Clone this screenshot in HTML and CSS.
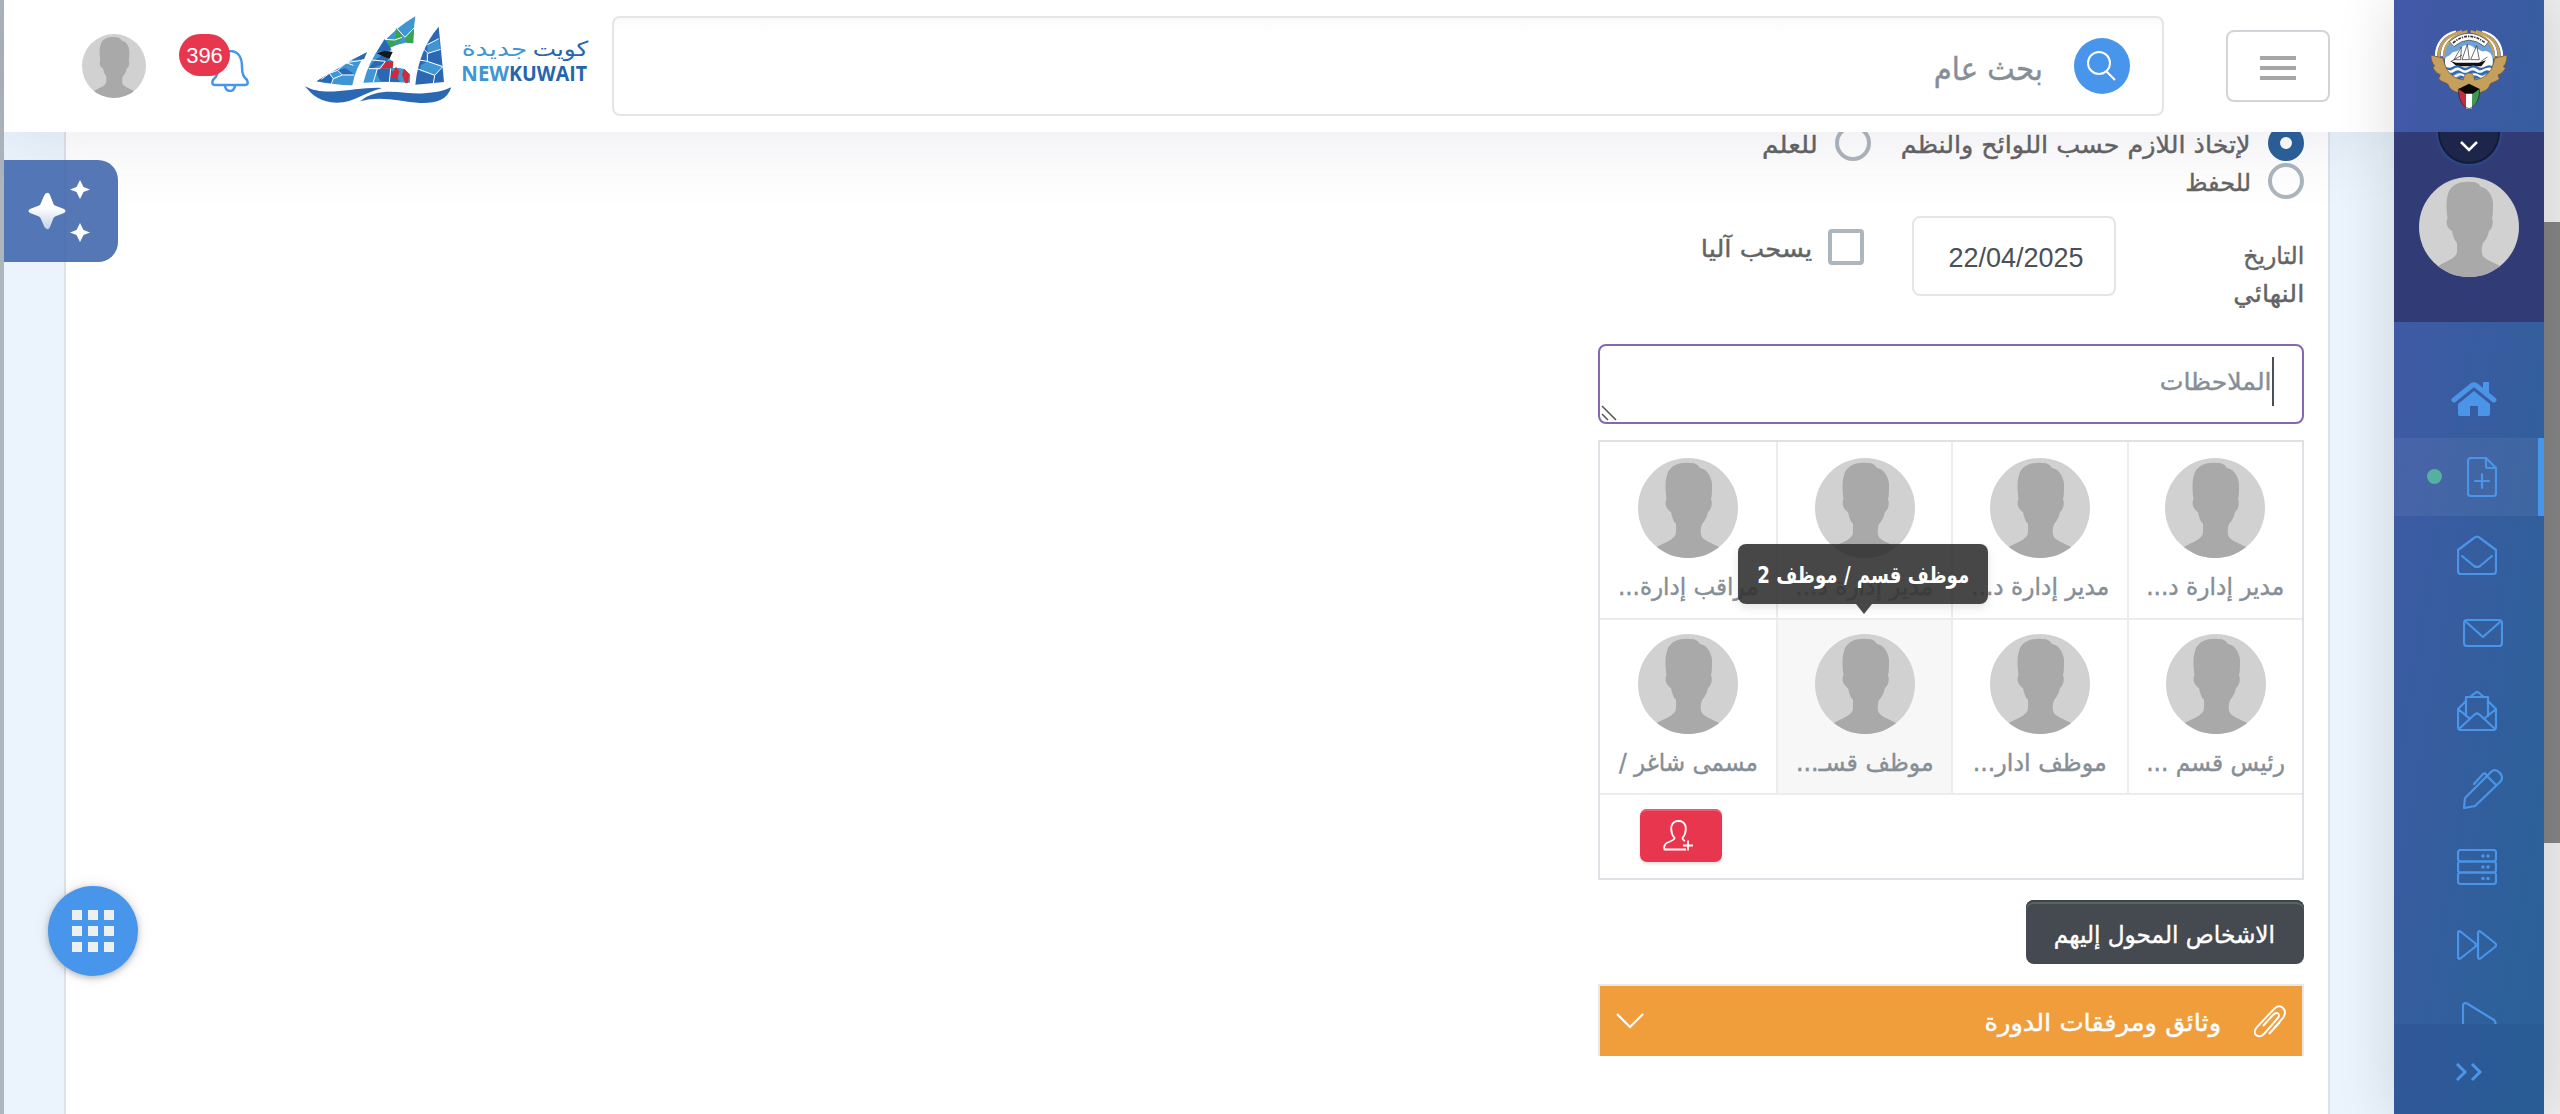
FILE: index.html
```html
<!DOCTYPE html>
<html lang="ar" dir="rtl">
<head>
<meta charset="utf-8">
<title>كويت جديدة</title>
<link rel="stylesheet" href="styles.css">
</head>
<body>
<svg class="defs" width="0" height="0">
  <defs>
    <clipPath id="round"><circle cx="50" cy="50" r="50"/></clipPath>
    <symbol id="avatar" viewBox="0 0 100 100">
      <g clip-path="url(#round)">
        <rect width="100" height="100" fill="#d1d1d1"/>
        <path fill="#a9a9a9" d="M16 91C26 84 38 82 38 74V66C35 63 34 59 33 54C29 52 26 46 28.500 41C27 30 27 22 30 14C34 7 42 4 52 5C58 5 60 7 62 10C69 11 73 18 74 26C74 33 74 38 73 41C75 46 73 52 70 54C69 59 67 63 64 66C62 73 62 78 66 81C71 85 79 87 84 91V100H16z"/>
      </g>
    </symbol>
  </defs>
</svg>
<div class="app">
  <div class="scroll"><div class="thumb"></div></div>
  <aside class="side">
    <div class="brand">
      <svg width="78" height="80" viewBox="0 0 234 240">
        <g fill="none" stroke="#fff" stroke-width="7"><path d="M18 82C18 45 40 15 78 8"/><path d="M35 82C36 52 52 26 86 14"/><path d="M216 82C216 45 194 15 156 8"/><path d="M199 82C198 52 182 26 148 14"/></g>
        <g fill="none" stroke="#c4a05c" stroke-width="8"><path d="M26 86C26 48 44 20 96 7"/><path d="M43 88C40 50 64 20 112 7"/><path d="M208 86C208 48 190 20 138 7"/><path d="M191 88C194 50 170 20 122 7"/></g>
        <circle cx="117" cy="86" r="73" fill="#6fa3d6"/>
        <path fill="#fff" d="M45 100C43 78 58 84 62 76C70 64 84 72 90 58C104 44 124 44 136 60C146 56 152 72 164 66C182 66 190 82 188 104L186 124H47z"/>
        <g stroke="#222" stroke-width="2" fill="#fff"><path d="M72 92L94 54L92 92zM96 92L112 46L118 92zM122 92L140 50L148 92z"/><path d="M62 98L96 78M152 98L172 84" fill="none"/></g>
        <path fill="#111" d="M62 96L78 101H146L168 94L154 112H80z"/>
        <g fill="none" stroke="#3767ae" stroke-width="7"><path d="M46 116q12 8 24 0t24 0t24 0t24 0t24 0t22 0"/><path d="M52 132q11 8 22 0t22 0t22 0t22 0t22 0t18 0"/><path d="M64 148q11 8 22 0t22 0t22 0t22 0t18 0"/></g>
        <g fill="none" stroke="#fff" stroke-width="6"><path d="M50 124q11 8 22 0t22 0t22 0t22 0t22 0t22 0"/><path d="M58 140q11 8 22 0t22 0t22 0t22 0t22 0"/></g>
        <path fill="#fff" stroke="#333" stroke-width="2" d="M58 38Q116-12 176 38L164 53Q116 14 72 53z"/>
        <path fill="none" stroke="#333" stroke-width="5" stroke-dasharray="9 3 4 3" d="M69 42Q116 2 166 42"/>
        <path fill="#c4a05c" stroke="#6f5524" stroke-width="2" d="M3 78L40 88C46 128 68 148 100 153C102 140 107 132 117 132C127 132 132 140 134 153C166 148 188 128 194 88L231 78C230 98 226 108 220 112L226 118C218 132 210 136 204 137L208 150C196 160 184 160 180 166C176 182 164 186 152 190H82C70 186 60 182 54 166C46 160 34 158 26 150L31 137C22 134 14 126 9 116L14 110C6 102 3 92 3 78z"/>
        <path fill="#fff" d="M104 180h24l-2 58q-9 4-18 0z"/>
        <path fill="#c62b3a" d="M86 178L108 188V236C94 228 86 214 86 178z"/>
        <path fill="#3e9a4e" d="M148 178L127 188V236C140 228 148 214 148 178z"/>
        <path fill="#080808" d="M117 164L149 180L128 194H107L85 180z"/>
        <path fill="none" stroke="#222" stroke-width="2" d="M85 180C86 216 98 232 117 239C136 232 148 216 149 180"/>
      </svg>
    </div>
    <div class="profile">
      <div class="notch"><svg width="20" height="12" viewBox="0 0 20 12"><path d="M2 2L10 10L18 2" fill="none" stroke="#fff" stroke-width="2.500"/></svg></div>
      <svg width="100" height="100"><use href="#avatar"/></svg>
    </div>
    <nav class="menu">
      <div class="item home"><svg width="46" height="36" viewBox="0 0 46 36"><path fill="#4a95e8" d="M23 10L39 23V33q0 2-2 2H27V25H19V35H9q-2 0-2-2V23z"/><path d="M3 19L21 4.500Q23 3 25 4.500L43 19" fill="none" stroke="#4a95e8" stroke-width="5" stroke-linecap="round"/><path fill="#4a95e8" d="M32 1h6v16l-6-5z"/></svg></div>
      <div class="item active"><svg width="30" height="40" viewBox="0 0 30 40"><path d="M1 4Q1 1 4 1H19L29 11V36Q29 39 26 39H4Q1 39 1 36zM19 1V9Q19 11 21 11H29M15 17V31M8 24H22"/></svg><i class="dot"></i></div>
      <div class="item"><svg width="40" height="40" viewBox="0 0 40 40"><path d="M1 15L17 3Q20 0 23 3L39 15V36Q39 39 36 39H4Q1 39 1 36zM5 21L17 31Q20 33 23 31L35 21"/></svg></div>
      <div class="item shift"><svg width="40" height="28" viewBox="0 0 40 28"><rect x="1" y="1" width="38" height="26" rx="3"/><path d="M2 2L20 18L38 2"/></svg></div>
      <div class="item"><svg width="40" height="40" viewBox="0 0 40 40"><path d="M9 10L1 18V36Q1 39 4 39H36Q39 39 39 36V18L31 10M9 25V6H31V25M13 6L18 2Q20 0 22 2L27 6M1 18L12 27M39 18L28 27M2 38L17 24Q20 21 23 24L38 38"/></svg></div>
      <div class="item shift"><svg width="40" height="40" viewBox="0 0 40 40"><path d="M1 39L2 29L28 3Q32-1 37 4Q41 9 37 13L12 37zM24 7L33 16M11 15L20 5Q22 3 24 7"/></svg></div>
      <div class="item"><svg width="40" height="36" viewBox="0 0 40 36"><rect x="1" y="1" width="38" height="11.500" rx="2.500"/><rect x="1" y="12.500" width="38" height="11" rx="2.500"/><rect x="1" y="23.500" width="38" height="11.500" rx="2.500"/><g class="solid"><circle cx="26" cy="7" r="1.800"/><circle cx="31" cy="7" r="1.800"/><circle cx="26" cy="18" r="1.800"/><circle cx="31" cy="18" r="1.800"/><circle cx="26" cy="29.500" r="1.800"/><circle cx="31" cy="29.500" r="1.800"/></g></svg></div>
      <div class="item"><svg width="40" height="30" viewBox="0 0 40 30"><path d="M1 3Q1 0 4 2L18 13Q20 15 18 17L4 28Q1 30 1 27zM21 3Q21 0 24 2L38 13Q40 15 38 17L24 28Q21 30 21 27z"/></svg></div>
      <div class="item"><svg width="35" height="42" viewBox="0 0 35 42"><path d="M1 4Q1 0 5 1.500L32 18Q35 21 32 24L5 40Q1 42 1 38z"/></svg></div>
    </nav>
    <div class="collapse"><svg width="28" height="20" viewBox="0 0 28 20"><path d="M2 2L10 10L2 18M17 2L25 10L17 18" fill="none" stroke="#4a95e8" stroke-width="3"/></svg></div>
  </aside>
  <div class="main">
    <header class="top">
      <button class="burger"><i></i><i></i><i></i></button>
      <div class="search">
        <span class="go"><svg width="32" height="32" viewBox="0 0 32 32"><g fill="none" stroke="#fff" stroke-width="2"><circle cx="13" cy="13" r="11"/><path d="M20 21L29 30"/></g></svg></span>
        <span class="hint t" style="--w:.91">بحث عام</span>
      </div>
      <svg class="logo" width="294" height="97" viewBox="30 30 882 291">
        <path fill="#3f96d2" d="M80 244Q168 190 231 157Q196 202 187 256Q130 255 80 244z"/>
        <path fill="#2a68b4" d="M168 188L231 157L222 178L187 180zM80 244L118 220L130 242L124 250zM143 211L165 204L192 222L157 225z"/>
        <path fill="#3f96d2" d="M220 248Q252 120 376 49Q370 92 368 132L347 126L330 160L300 150L304 180L330 204L360 208V248Q290 244 220 248z"/>
        <path fill="#2a68b4" d="M284 116L306 150L260 156L246 180zM236 208Q262 160 300 164L290 186L250 204zM262 206L302 206L330 246L272 244L262 226z"/>
        <path fill="#fff" d="M370 130L347 128L323 134L300 142L308 156L298 178L310 184L308 204L328 204L342 206L358 222L372 226z"/>
        <path fill="#39a352" d="M318 82L336 112L323 134L316 118zM372 86L370 130L347 128L345 112zM290 118L314 120L318 134L300 144z"/>
        <path fill="#171717" d="M260 160L284 152L308 156L298 176L282 170z"/>
        <path fill="#cd2b3c" d="M286 184L310 184L308 204L270 206zM318 200L328 214L322 238L300 230zM342 206L358 222L354 248L346 250L336 224z"/>
        <path fill="#2a68b4" d="M446 80Q455 170 462 246L376 254Q386 150 446 80z"/>
        <path fill="#3f96d2" d="M412 134L448 114L450 148L412 160zM392 196L412 184L458 196L434 226L390 214z"/>
        <path fill="none" stroke="#fff" stroke-width="3" d="M94 238L118 220L130 236L124 252M118 220L143 211L157 225H192M130 236L157 225M143 211L168 188L222 180M168 188L190 196M318 82L345 112L372 84M284 118L314 120L336 112M246 180L286 184L270 206H236M302 206L298 246M262 206L250 246M412 134L446 116M400 146L414 160L452 148M386 180L412 184L458 200L434 226L382 206M412 160L412 184M434 226L430 250"/>
        <path fill="#2a68b4" d="M45 259C100 290 175 266 245 264Q278 262 275 265C225 278 200 300 160 307C100 314 70 290 45 259z"/>
        <path fill="#2a68b4" d="M210 304C270 254 350 286 402 280Q450 278 484 262C470 302 440 310 390 309C330 304 270 286 210 304z"/>
        <text class="logo-ar" x="895" y="168" textLength="167" lengthAdjust="spacingAndGlyphs" fill="#2565ae">كويت</text>
        <text class="logo-ar" x="712" y="168" textLength="197" lengthAdjust="spacingAndGlyphs" fill="#3f96d2">جديدة</text>
        <text class="logo-en" x="514" y="242" textLength="143" lengthAdjust="spacingAndGlyphs" fill="#3f96d2">NEW</text>
        <text class="logo-en" x="657" y="242" textLength="234" lengthAdjust="spacingAndGlyphs" fill="#2565ae">KUWAIT</text>
      </svg>
      <div class="bell">
        <svg width="38" height="42" viewBox="0 0 38 42"><path d="M19 1C10 1 7 9 7 17C7 25 5 27 2 30Q0 35 4 35H34Q38 35 36 30C33 27 31 25 31 17C31 9 28 1 19 1zM14 36Q15 41 19 41Q23 41 24 36" fill="none" stroke="#4895ec" stroke-width="2.500"/></svg>
        <span class="count">396</span>
      </div>
      <svg class="me" width="64" height="64"><use href="#avatar"/></svg>
    </header>
    <div class="content">
      <section class="panel">
        <div class="form">
          <div class="opts">
            <label class="opt first"><i class="radio on"></i><span class="t" style="--w:1.058">لإتخاذ اللازم حسب اللوائح والنظم</span></label>
            <label class="opt"><i class="radio"></i><span class="t" style="--w:1.1">للعلم</span></label>
          </div>
          <div class="opts"><label class="opt"><i class="radio"></i><span class="t" style="--w:1">للحفظ</span></label></div>
          <div class="daterow">
            <div class="dlabel"><span class="t" style="--w:.98">التاريخ</span><span class="t" style="--w:1.07">النهائي</span></div>
            <div class="date">22/04/2025</div>
            <label class="opt auto"><i class="check"></i><span class="t" style="--w:1.08">يسحب آليا</span></label>
          </div>
          <div class="notes"><i class="caret"></i><span class="t" style="--w:1.05">الملاحظات</span>
            <svg class="grip" width="16" height="16" viewBox="0 0 16 16"><path d="M1 1L15 15M1 9L7 15" stroke="#555" stroke-width="1.500"/></svg>
          </div>
          <div class="people">
            <div class="cells">
              <div class="cell"><svg width="100" height="100"><use href="#avatar"/></svg><span class="t" style="--w:.97">مدير إدارة د...</span></div>
              <div class="cell"><svg width="100" height="100"><use href="#avatar"/></svg><span class="t" style="--w:.97">مدير إدارة د...</span></div>
              <div class="cell"><svg width="100" height="100"><use href="#avatar"/></svg><span class="t" style="--w:.97">مدير إدارة د...</span></div>
              <div class="cell"><svg width="100" height="100"><use href="#avatar"/></svg><span class="t" style="--w:.96">مراقب إدارة...</span></div>
              <div class="cell"><svg width="100" height="100"><use href="#avatar"/></svg><span class="t" style="--w:.97">رئيس قسم ...</span></div>
              <div class="cell"><svg width="100" height="100"><use href="#avatar"/></svg><span class="t" style="--w:.99">موظف ادار...</span></div>
              <div class="cell hover"><svg width="100" height="100"><use href="#avatar"/></svg><span class="t" style="--w:.985">موظف قسـ...</span>
                <div class="tip"><span class="t" style="--w:.79">موظف قسم / موظف 2</span></div>
              </div>
              <div class="cell"><svg width="100" height="100"><use href="#avatar"/></svg><span class="t" style="--w:.96">مسمى شاغر /</span></div>
            </div>
            <div class="actions"><button class="add"><svg width="31" height="31" viewBox="0 0 31 31"><path d="M23 29.500H1.500Q0 24 6 22C10 20 12 19 11.500 18C8 14 8 9 8.500 6Q10 1 15.500 1Q21 1 22.500 6C23 9 23 14 19.500 18C19.500 20 20 20 22 21M20 25.500H30M25 20.500V30.500" fill="none" stroke="#fff" stroke-width="1.800"/></svg></button></div>
          </div>
          <button class="dark"><span class="t" style="--w:.966">الاشخاص المحول إليهم</span></button>
          <div class="docs">
            <svg width="32" height="33" viewBox="0 0 32 33"><path d="M15 29L29 13Q33 7 29 3Q25-1 20 4L3 22Q-1 27 2 30Q6 33 10 29L24 13Q26 10 24 8.500Q22 7 19 10L9 21M15 29L26 17" fill="none" stroke="#fff" stroke-width="1.900"/></svg>
            <span class="t" style="--w:1.07">وثائق ومرفقات الدورة</span>
            <svg class="down" width="28" height="16" viewBox="0 0 28 16"><path d="M1 1L14 14L27 1" fill="none" stroke="#fff" stroke-width="2.200"/></svg>
          </div>
        </div>
      </section>
    </div>
  </div>
</div>
<div class="ai"><svg width="76" height="64" viewBox="0 0 76 64"><defs><linearGradient id="g" x1="0" y1="0" x2="0" y2="1"><stop offset=".4" stop-color="#fff"/><stop offset="1" stop-color="#c3d0e8"/></linearGradient></defs><path fill="url(#g)" d="M19 14Q20.500 13 22 16L25.500 25Q26 26 27 26.500L36 30Q39 32 36 34L27 37.500Q26 38 25.500 39L22 48Q20.500 51 19 50Q17 50 16 47L12.500 39Q12 38 11 37.500L2 34Q-1 32 2 30L11 26.500Q12 26 12.500 25L16 17Q17 14 19 14z"/><path fill="#fff" d="M52 1L55.500 8L62 10.500L55.500 13L52 20L48.500 13L42 10.500L48.500 8z"/><path fill="#fff" d="M52 44L55.500 51L62 53.500L55.500 56L52 63L48.500 56L42 53.500L48.500 51z"/></svg></div>
<div class="fab"><i></i><i></i><i></i><i></i><i></i><i></i><i></i><i></i><i></i></div>
</body>
</html>
```

FILE: styles.css
```css
*{box-sizing:border-box}
html,body{margin:0;height:1114px;overflow:hidden}
body{font-family:"DejaVu Sans","Liberation Sans",sans-serif;font-size:24px;color:#646464;background:#fff}
button{font:inherit;border:0;margin:0;cursor:pointer}
.defs{position:absolute}
.t{display:inline-block;white-space:nowrap;transform:scaleX(var(--w));transform-origin:100% 50%;-webkit-text-stroke:.4px currentColor}
.app{display:flex;height:1114px}
.scroll{width:16px;background:#eee;flex:none;padding-top:222px}
.thumb{height:621px;background:#848484}
.side{width:150px;flex:none;display:flex;flex-direction:column;background:linear-gradient(100deg,#4159a6 10%,#2b6198 90%);box-shadow:0 0 60px rgba(0,0,0,.14);z-index:4}
.brand{height:132px;flex:none;padding:29px 0 0;display:flex;justify-content:center;align-items:flex-start}
.profile{height:190px;flex:none;background:#313c77;display:flex;flex-direction:column;align-items:center}
.notch{width:62px;height:32px;background:#1d254b;border:2px solid #141b38;border-top:0;border-radius:0 0 31px 31px;display:flex;justify-content:center;padding-top:8px;margin-bottom:13px;box-shadow:0 0 4px #2d5ca0}
.menu{flex:1;min-height:0;overflow:hidden;padding-top:38px}
.item{height:78px;display:flex;align-items:center;padding-right:47px;padding-bottom:1px}
.item svg{fill:none;stroke:#4a95e8;stroke-width:2.200;stroke-linejoin:round;stroke-linecap:round}
.item.home svg{stroke:none}
.item .solid{fill:#4a95e8;stroke:none}
.item.shift{padding-right:41px}
.item.active{background:rgba(255,255,255,.06);border-right:6px solid #4895ec;padding-right:41px;gap:25px}
.dot{width:15px;height:15px;border-radius:50%;background:#55b0a0}
.collapse{height:90px;flex:none;background:rgba(30,60,130,.16);display:flex;align-items:center;padding-right:61px;padding-top:5px}
.main{flex:1;min-width:0;border-left:4px solid #adb5bd;display:flex;flex-direction:column}
.top{height:132px;flex:none;background:#fff;display:flex;align-items:center;padding-right:64px;box-shadow:0 0 80px rgba(60,60,100,.12);z-index:2}
.burger{width:104px;height:72px;border:2px solid #d3d3da;border-radius:8px;background:#fff;display:flex;flex-direction:column;align-items:center;justify-content:center;gap:6px;padding:4px 0 0}
.burger i{width:36px;height:4px;background:#a6a6a6}
.search{width:1552px;height:100px;margin-right:62px;border:2px solid #e5e5e5;border-radius:8px;display:flex;align-items:center;padding-right:32px;font-size:32px;color:#868e96;background:linear-gradient(#fafafa,#fff 14px)}
.go{width:56px;height:56px;border-radius:50%;background:#4895ec;display:flex;align-items:center;justify-content:center;margin-left:31px}
.hint{margin-top:6px}
.logo{margin:-15px 18px 0 0}
.logo-ar{font:62px "DejaVu Sans",sans-serif}
.logo-en{font:bold 62px "Open Sans",sans-serif;direction:ltr}
.bell{position:relative;margin:10px 51px 0 0;height:42px}
.count{position:absolute;left:-32px;top:-16px;width:51px;height:42px;border-radius:21px;background:#e8364e;color:#fff;font:22px/44px "Liberation Sans",sans-serif;text-align:center}
.me{margin-right:65px}
.content{flex:1;background:#ebf4fc;padding:0 64px 0 60px;display:flex;min-height:0}
.panel{flex:1;background:#fff;border:solid #dde2e8;border-width:0 2px;padding-right:24px}
.form{width:706px;margin-top:-7px}
.opts{display:flex;height:38px;gap:32px}
.opt{display:flex;gap:17px;height:36px;line-height:40px}
.opt.first{width:401px}
.radio{width:36px;height:36px;flex:none;border:4px solid #adb5bd;border-radius:50%;background:#fff}
.radio.on{border:12px solid #2a6099}
.check{width:36px;height:36px;border:4px solid #adb5bd;border-radius:4px;background:#fff}
.daterow{display:flex;height:128px;padding-top:15px}
.dlabel{width:188px;display:flex;flex-direction:column;line-height:38px;padding-top:21px;align-items:flex-start}
.date{width:204px;height:80px;border:2px solid #e5e5e5;border-radius:8px;text-align:center;font:27px/81px "Liberation Sans",sans-serif;color:#495057;padding-left:4px}
.auto{margin:13px 48px 0 0;gap:16px}
.notes{position:relative;margin-top:15px;height:80px;border:2px solid #8467b0;border-radius:8px;display:flex;padding:11px 28px 0 0;line-height:51px;color:#868e96}
.caret{width:2px;height:49px;background:#495057}
.grip{position:absolute;left:1px;bottom:1px}
.people{margin-top:16px;border:2px solid #dee2e6;height:440px}
.cells{display:grid;grid-template-columns:175px 176px 175px 176px;grid-template-rows:178px 175px}
.cell{position:relative;border-bottom:2px solid #ececec;border-left:2px solid #ececec;padding:16px 0 0 0;display:flex;flex-direction:column;align-items:center;color:#868e96;line-height:40px}
.cell:nth-child(n+5){padding-top:14px}
.cell:nth-child(4n){border-left:0}
.cell .t{margin-top:9px;transform-origin:50% 50%}
.cell > svg{margin-left:-2px}
.cell:nth-child(n+2) > svg{transform:translateX(1px)}
.cell:nth-child(-n+3),.cell:nth-child(n+5):nth-child(-n+7){padding-left:0;padding-right:0}
.hover{background:#f7f7f7}
.tip{position:absolute;width:250px;height:60px;left:-40px;top:-76px;border-radius:8px;background:rgba(51,51,51,.9);color:#fff;font-weight:bold;font-size:23px;display:flex;justify-content:center;align-items:center;box-shadow:0 4px 10px rgba(0,0,0,.1);z-index:3}
.tip .t{margin:2px 0 0;-webkit-text-stroke:0}
.tip::after{content:"";position:absolute;top:60px;left:118px;border:8px solid transparent;border-top:10px solid #484848;border-bottom:0}
.actions{height:83px;display:flex;justify-content:flex-end;padding:14px 0 0 40px}
.add{width:82px;height:53px;border-radius:7px;background:#e8364e;box-shadow:inset 0 3px 0 -1px #ee5b6f,0 2px 3px rgba(0,0,0,.12);display:flex;align-items:center;justify-content:center;padding:0 6px 0 0}
.dark{display:flex;align-items:center;width:278px;height:64px;margin-top:20px;padding:5px 29px 0 0;background:#454a50;color:#fff;border-radius:8px;box-shadow:inset 0 2px 0 #3f4449,inset 0 4px 0 #5b6363}
.docs{height:72px;margin-top:20px;background:#f09e3c;border:2px solid #e8e8e8;border-bottom:0;display:flex;align-items:center;padding:0 16px;color:#fff}
.docs .t{margin:4px 33px 0 0}
.down{margin-right:auto}
.ai{position:absolute;z-index:5;left:4px;top:160px;width:114px;height:102px;border-radius:0 20px 20px 0;background:rgba(66,104,174,.9);direction:ltr;padding:19px 0 0 24px}
.fab{position:absolute;z-index:5;left:48px;top:886px;width:90px;height:90px;border-radius:50%;background:#4895ec;box-shadow:0 2px 6px rgba(0,0,0,.25),0 0 16px rgba(0,0,0,.09);display:grid;grid-template-columns:repeat(3,10px);gap:6px;align-content:center;justify-content:center}
.fab i{height:10px;background:#ecf0f1}
```
